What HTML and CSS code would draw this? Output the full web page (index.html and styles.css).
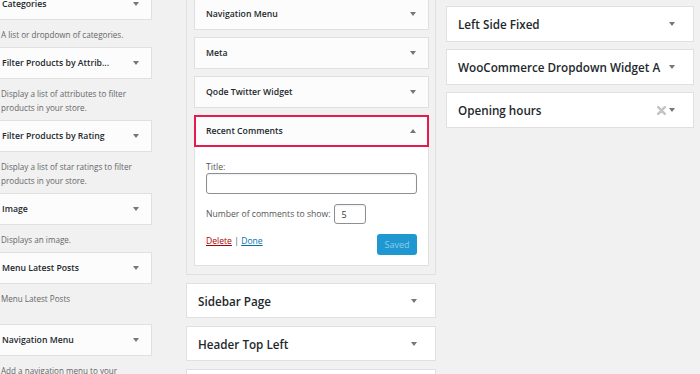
FILE: index.html
```html
<!DOCTYPE html>
<html>
  <head>
    <title>Widgets</title>
    <link rel="stylesheet" href="styles.css">
  </head>
  <body>
    <div class="widgets-page">
      <!-- available widgets -->
      <div class="available">
        <div class="widget-item">
          <div class="widget-top"><h3>Categories</h3><span class="arrow"></span></div>
          <p class="widget-desc">A list or dropdown of categories.</p>
        </div>
        <div class="widget-item">
          <div class="widget-top"><h3>Filter Products by Attrib...</h3><span class="arrow"></span></div>
          <p class="widget-desc">Display a list of attributes to filter products in your store.</p>
        </div>
        <div class="widget-item">
          <div class="widget-top"><h3>Filter Products by Rating</h3><span class="arrow"></span></div>
          <p class="widget-desc">Display a list of star ratings to filter products in your store.</p>
        </div>
        <div class="widget-item">
          <div class="widget-top"><h3>Image</h3><span class="arrow"></span></div>
          <p class="widget-desc">Displays an image.</p>
        </div>
        <div class="widget-item">
          <div class="widget-top"><h3>Menu Latest Posts</h3><span class="arrow"></span></div>
          <p class="widget-desc tall">Menu Latest Posts</p>
        </div>
        <div class="widget-item">
          <div class="widget-top"><h3>Navigation Menu</h3><span class="arrow"></span></div>
          <p class="widget-desc">Add a navigation menu to your sidebar.</p>
        </div>
      </div>

      <!-- sidebars, middle column -->
      <div class="sidebars">
        <div class="sidebar open">
          <div class="widget">
            <div class="widget-top"><h3>Navigation Menu</h3><span class="arrow"></span></div>
          </div>
          <div class="widget">
            <div class="widget-top"><h3>Meta</h3><span class="arrow"></span></div>
          </div>
          <div class="widget">
            <div class="widget-top"><h3>Qode Twitter Widget</h3><span class="arrow"></span></div>
          </div>
          <div class="widget expanded">
            <div class="widget-top highlight"><h3>Recent Comments</h3><span class="arrow up"></span></div>
            <div class="widget-inside">
              <label class="field-label" for="rc-title">Title:</label>
              <input class="field" id="rc-title" type="text">
              <div class="field-row">
                <label for="rc-number">Number of comments to show:</label>
                <input class="field tiny" id="rc-number" type="text" value="5">
              </div>
              <div class="widget-actions">
                <div class="links"><a href="#" class="delete">Delete</a> | <a href="#" class="done">Done</a></div>
                <button class="save" disabled>Saved</button>
              </div>
            </div>
          </div>
        </div>
        <div class="sidebar-name"><h2>Sidebar Page</h2><span class="arrow"></span></div>
        <div class="sidebar-name"><h2>Header Top Left</h2><span class="arrow"></span></div>
        <div class="sidebar-name"><h2>Header Top Right</h2><span class="arrow"></span></div>
      </div>

      <!-- sidebars, right column -->
      <div class="sidebars right">
        <div class="sidebar-name"><h2>Left Side Fixed</h2><span class="arrow"></span></div>
        <div class="sidebar-name"><h2>WooCommerce Dropdown Widget A</h2><span class="arrow"></span></div>
        <div class="sidebar-name">
          <h2>Opening hours</h2>
          <span class="name-actions">
            <svg class="remove" width="9" height="9" viewBox="0 0 9 9">
              <path d="M1.2 1.2 L7.8 7.8 M7.8 1.2 L1.2 7.8" stroke="#c3c3c3" stroke-width="2.4" stroke-linecap="round"/>
            </svg>
            <span class="arrow"></span>
          </span>
        </div>
      </div>
    </div>
  </body>
</html>
```

FILE: styles.css
```css
body {
  margin: 0;
  background: #f1f1f1;
  font-family: "Open Sans", "Noto Sans", Arial, sans-serif;
  color: #23282d;
  overflow: hidden;
}
* {
  box-sizing: border-box;
}
.widgets-page {
  display: flex;
  align-items: flex-start;
}
h2,
h3 {
  margin: 0;
  font-weight: 600;
  white-space: nowrap;
}
.arrow {
  width: 0;
  height: 0;
  border-left: 3px solid transparent;
  border-right: 3px solid transparent;
  border-top: 4px solid #72777c;
  flex: none;
}
.arrow.up {
  border-top: none;
  border-bottom: 4px solid #72777c;
}

/* available widgets */
.available {
  width: 160px;
  margin: -12px 0 0 -8px;
}
.widget-top {
  display: flex;
  align-items: center;
  justify-content: space-between;
  height: 32px;
  padding: 0 12px 0 9px;
  background: #fcfcfc;
  border: 1px solid #e0e0e0;
}
.widget-top h3 {
  font-size: 8.7px;
}
.widget-desc {
  margin: 0;
  padding: 8px 8px 5px 9px;
  font-size: 8.1px;
  line-height: 14px;
  color: #666;
}
.widget-desc.tall {
  min-height: 40px;
}

/* sidebars */
.sidebars {
  width: 250px;
  margin: -10px 0 0 34px;
}
.sidebars.right {
  width: 248px;
  margin: 6px 0 0 10px;
}
.sidebar.open {
  border: 1px solid #e0e0e0;
  padding: 7px 6px 8px 7px;
}
.widget + .widget {
  margin-top: 7px;
}
.sidebar .widget-top {
  padding-left: 11px;
}
.widget-top.highlight {
  border: 2px solid #e31c4f;
  padding-left: 10px;
  padding-right: 11px;
}
.widget-inside {
  background: #fff;
  border: 1px solid #e0e0e0;
  border-top: none;
  padding: 14px 11px 10px 11px;
  font-size: 8.6px;
  color: #555;
}
.field-label {
  display: block;
  line-height: 12px;
}
.field {
  display: block;
  width: 100%;
  height: 21px;
  border: 1px solid #8c8f94;
  border-radius: 3px;
  background: #fff;
  box-shadow: inset 0 1px 2px rgba(0, 0, 0, 0.07);
  font-family: inherit;
  font-size: 9px;
  color: #32373c;
  padding: 0 6px;
}
.field-row {
  display: flex;
  align-items: center;
  margin-top: 10px;
  gap: 4px;
}
.field.tiny {
  width: 32px;
  height: 20px;
}
.widget-actions {
  display: flex;
  justify-content: space-between;
  align-items: flex-start;
  margin-top: 10px;
}
.links {
  line-height: 14px;
}
.links a {
  text-decoration: underline;
}
.links .delete {
  color: #a00;
}
.links .done {
  color: #0073aa;
}
.save {
  width: 40px;
  height: 21px;
  border: none;
  border-radius: 3px;
  background: #1f98d1;
  color: #8ccbe8;
  font-family: inherit;
  font-size: 9px;
  padding: 0;
}
.sidebar-name {
  display: flex;
  align-items: center;
  justify-content: space-between;
  height: 35px;
  margin-top: 8px;
  padding: 0 18px 0 11px;
  background: #fff;
  border: 1px solid #e0e0e0;
}
.right .sidebar-name {
  height: 36px;
  margin-top: 7px;
}
.right .sidebar-name:first-child {
  margin-top: 0;
}
.sidebar-name h2 {
  font-size: 11.7px;
}
.name-actions {
  display: flex;
  align-items: center;
  gap: 3px;
}
.remove {
  display: block;
}
```
